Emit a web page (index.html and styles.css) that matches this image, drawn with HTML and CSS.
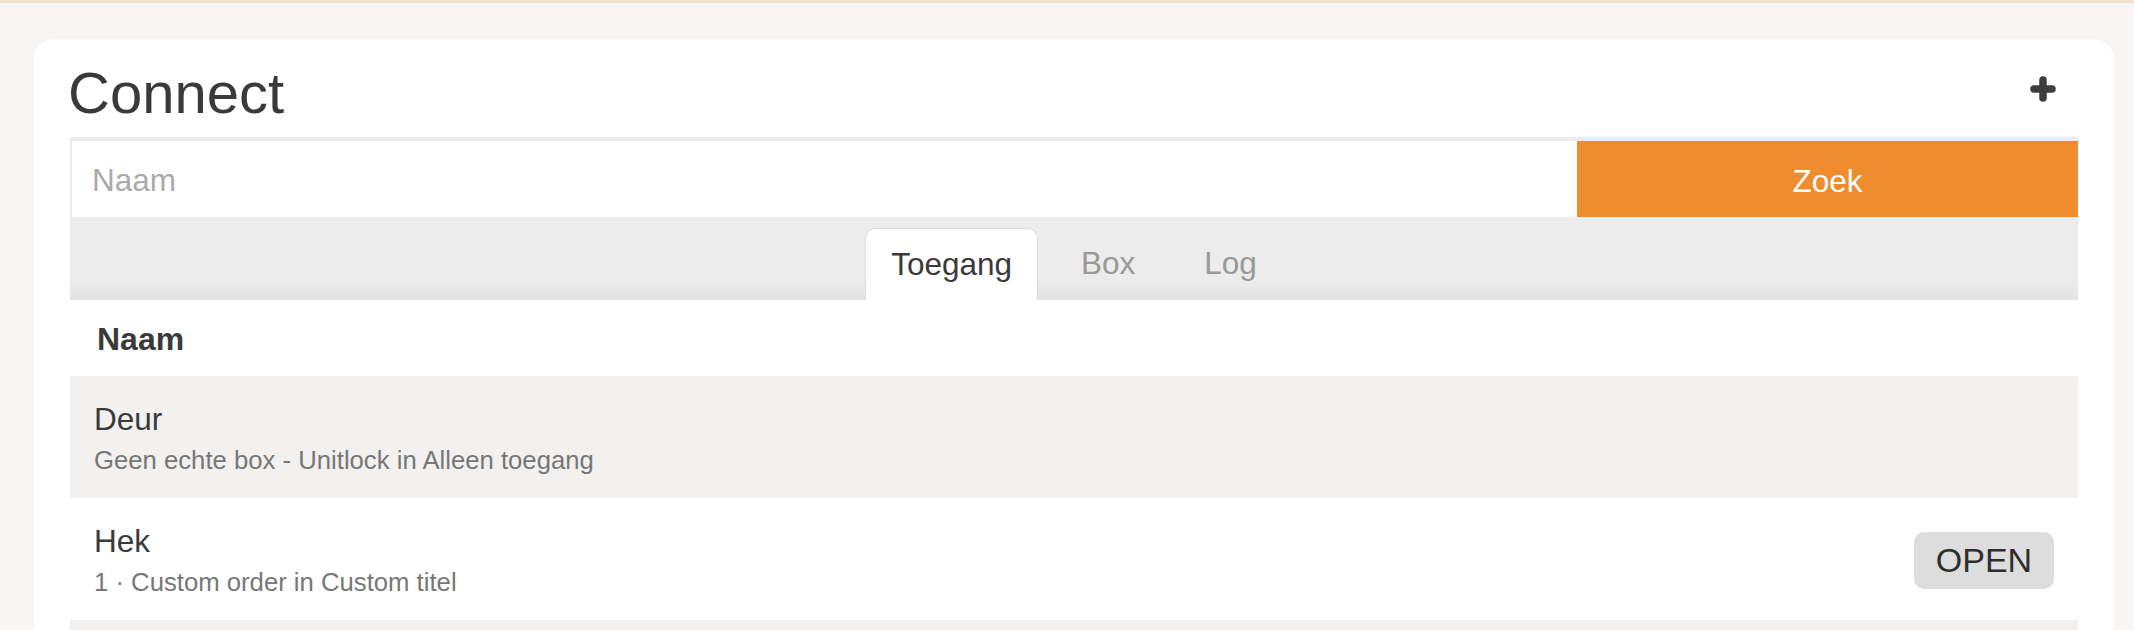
FILE: index.html
```html
<!DOCTYPE html>
<html lang="nl">
<head>
<meta charset="utf-8">
<title>Connect</title>
<link rel="stylesheet" href="styles.css">
</head>
<body>
<div class="topline"></div>
<main class="card">
  <header class="card-header">
    <h1 class="title">Connect</h1>
    <button class="add-btn" aria-label="Toevoegen">
      <svg width="26" height="26" viewBox="0 0 26 26"><path d="M13 4v18M4 13h18" stroke="#3d3d3d" stroke-width="7.5" stroke-linecap="round" fill="none"/></svg>
    </button>
  </header>
  <form class="search">
    <input class="search-input" type="text" placeholder="Naam">
    <button class="search-btn" type="button">Zoek</button>
  </form>
  <nav class="tabs">
    <span class="tab tab-active">Toegang</span>
    <span class="tab">Box</span>
    <span class="tab">Log</span>
  </nav>
  <div class="list-head">Naam</div>
  <ul class="list">
    <li class="row row-alt">
      <div class="row-text">
        <div class="row-title">Deur</div>
        <div class="row-sub">Geen echte box - Unitlock in Alleen toegang</div>
      </div>
    </li>
    <li class="row">
      <div class="row-text">
        <div class="row-title">Hek</div>
        <div class="row-sub">1 · Custom order in Custom titel</div>
      </div>
      <button class="open-btn" type="button">OPEN</button>
    </li>
    <li class="row row-alt">
      <div class="row-text">
        <div class="row-title">&nbsp;</div>
        <div class="row-sub">&nbsp;</div>
      </div>
    </li>
  </ul>
</main>
</body>
</html>
```
FILE: styles.css
```css
* { box-sizing: border-box; }
html, body { margin: 0; padding: 0; }
body {
  background: #f7f6f4;
  font-family: "Liberation Sans", Arial, Helvetica, sans-serif;
  color: #3a3a3a;
  overflow: hidden;
  height: 630px;
}
.topline {
  height: 3px;
  background: #f6e2cb;
  border-bottom: 1px solid #e6e1da;
}
.card {
  background: #fff;
  margin: 36px 20px 0 34px;
  border-radius: 20px 20px 0 0;
  padding: 20px 36px 0 36px;
}
.card-header {
  display: flex;
  justify-content: space-between;
  align-items: flex-start;
  height: 78px;
}
.title {
  margin: 0 0 0 -2px;
  font-size: 58px;
  font-weight: normal;
  line-height: 68px;
  color: #3a3a3a;
}
.add-btn {
  margin: 17px 22px 0 0;
  padding: 0;
  border: 0;
  background: none;
  width: 26px;
  height: 26px;
  display: flex;
}
.search {
  display: flex;
  margin: 0;
  border-top: 4px solid #ececec;
  border-left: 2px solid #ececec;
  height: 80px;
}
.search-input {
  flex: 1;
  border: 0;
  outline: none;
  padding: 2px 0 0 20px;
  font-family: inherit;
  font-size: 31.5px;
  color: #333;
  background: #fff;
}
.search-input::placeholder { color: #aaaaaa; }
.search-btn {
  width: 501px;
  border: 0;
  background: #ee8c2e;
  color: #fff;
  font-family: inherit;
  font-size: 31.5px;
  padding: 5px 0 0 0;
}
.tabs {
  display: flex;
  justify-content: center;
  align-items: flex-end;
  gap: 17px;
  height: 83px;
  background: linear-gradient(to bottom, #ececec 0, #ececec 78%, #e2e2e2 100%);
}
.tab {
  padding: 0 26px;
  height: 72px;
  line-height: 71px;
  font-size: 31.5px;
  color: #999;
}
.tab-active {
  background: #fff;
  color: #3a3a3a;
  border: 1px solid #dcdcdc;
  border-bottom: 0;
  border-radius: 10px 10px 0 0;
  padding: 0 25px;
}
.list-head {
  height: 76px;
  line-height: 78px;
  padding-left: 27px;
  font-size: 32px;
  font-weight: bold;
  color: #3a3a3a;
}
.list { list-style: none; margin: 0; padding: 0; }
.row {
  display: flex;
  align-items: center;
  justify-content: space-between;
  height: 122px;
  padding: 2px 24px 0 24px;
}
.row-alt { background: #f2f1ef; }
.row-title {
  font-size: 31.5px;
  line-height: 36px;
  color: #3a3a3a;
}
.row-sub {
  margin-top: 8px;
  font-size: 25.7px;
  line-height: 30px;
  color: #777;
}
.open-btn {
  width: 140px;
  height: 57px;
  border: 0;
  border-radius: 10px;
  background: #dddddd;
  color: #2e2e2e;
  font-family: inherit;
  font-size: 34px;
  padding: 0;
}
```
